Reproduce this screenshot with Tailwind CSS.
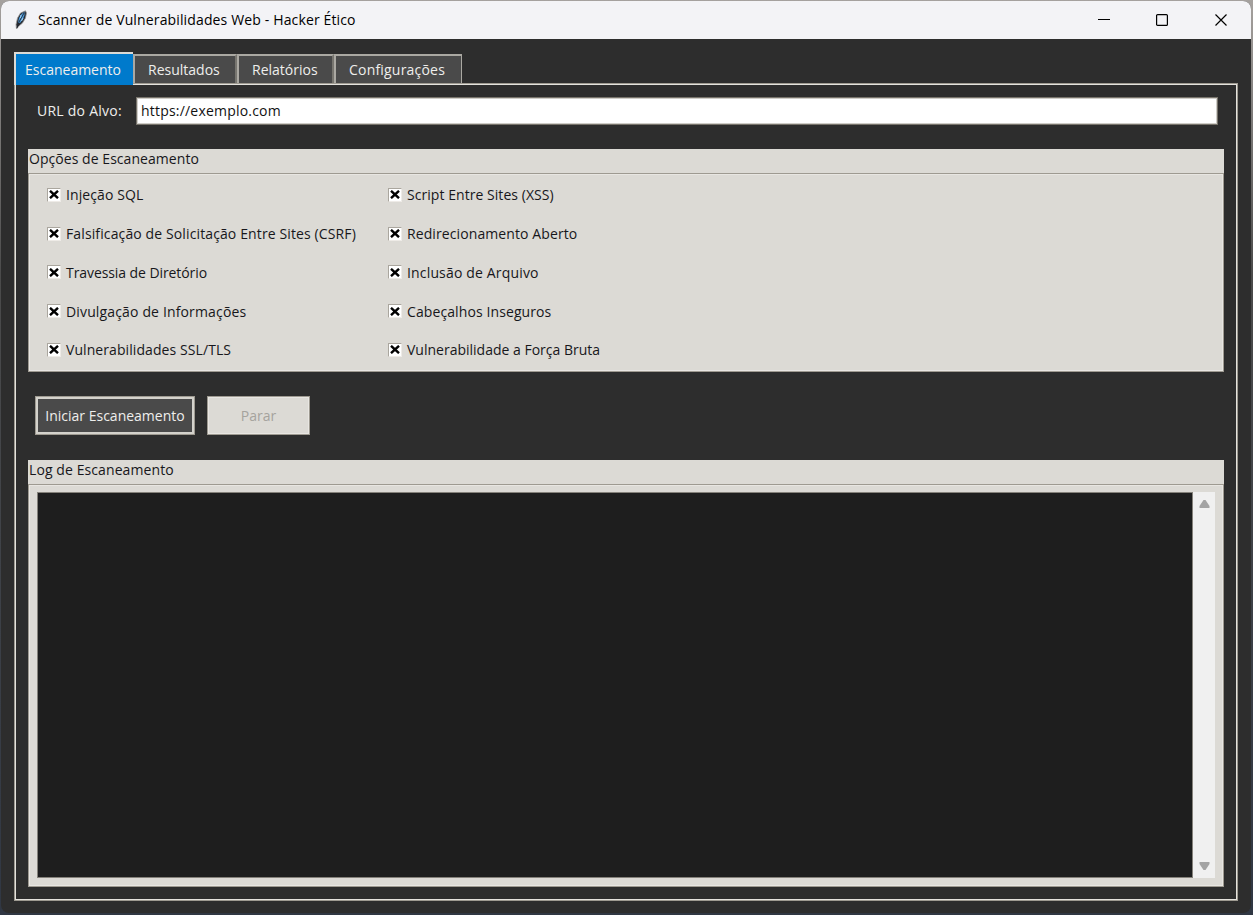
<!DOCTYPE html>
<html lang="pt-BR">
  <head>
    <meta charset="utf-8">
    <title>Scanner de Vulnerabilidades Web - Hacker Ético</title>
    <script src="https://cdn.jsdelivr.net/npm/@tailwindcss/browser@4"></script>
  </head>

  <body class="h-[915px] w-[1253px] overflow-hidden bg-gradient-to-b from-[#a5a19e] via-[#4b4b4b] via-30% to-[#303743] p-px pr-0.5 pb-0.5 font-['Open_Sans',sans-serif] text-[14px] leading-5 whitespace-nowrap">
    <div class="flex h-[912px] w-[1250px] flex-col overflow-hidden rounded-lg bg-[#2d2d2d]">
      <!-- Title bar -->
      <header class="flex h-[38px] shrink-0 items-center bg-[#f3f3f6] pl-3 text-black">
        <svg class="h-5 w-4" viewBox="0 0 16 20">
          <path d="M3.5 19 3 14.500 4.500 8 7.500 3 12.500 .8 13.500 3 12.500 8 9.500 13 6 16Z" fill="#292d35" stroke="#999" stroke-width=".8" />
          <path d="M5 13 6 8 8.500 4 11.500 2 11.500 5 10 9 7 13Z" fill="#4b9cdd" />
          <path d="M4 18 6 12 11 3" fill="none" stroke="#20242c" stroke-width=".9" />
          <path d="M8 5 7.500 8M10 8 8.500 11" stroke="#a7d4f4" />
        </svg>
        <h1 class="ml-[9px] w-[318px] text-[14px] tracking-[0.14px]"><span>Scanner de Vulnerabilidades Web - Hacker Ético</span></h1>
        <div class="ml-auto flex items-center pr-[24px]">
          <svg class="mr-[46px] size-3" viewBox="0 0 12 12"><path d="M0 5.500h12" stroke="#000" /></svg>
          <svg class="mr-[47px] size-3" viewBox="0 0 12 12" fill="none"><rect x=".6" y=".6" width="10.800" height="10.800" rx="1" stroke="#000" stroke-width="1.200" /></svg>
          <svg class="size-3" viewBox="0 0 12 12"><path d="m.5.5 11 11M11.500.5l-11 11" stroke="#000" stroke-width="1.200" /></svg>
        </div>
      </header>

      <main class="flex flex-1 flex-col px-[13px] pt-[13px] pb-3">
        <!-- Tabs -->
        <nav class="flex h-[31px] shrink-0 items-end text-[#eeeeec]">
          <div class="z-10 -mb-[2px] flex h-[33px] w-[119px] items-center border-t-2 border-l-2 border-[#dcdad5] bg-[#007acc] pt-px pl-[9px]"><span>Escaneamento</span></div>
          <div class="flex h-[29px] w-[104px] items-center border-2 border-b-0 border-[#aaa8a2] border-r-[#77756f] bg-[#4a4a4a] pt-px pl-[13px]"><span>Resultados</span></div>
          <div class="flex h-[29px] w-[97px] items-center border-2 border-b-0 border-[#aaa8a2] border-r-[#77756f] bg-[#4a4a4a] pt-px pl-[13px]"><span>Relatórios</span></div>
          <div class="flex h-[29px] w-[128px] items-center border-t-2 border-r border-l-2 border-[#aaa8a2] bg-[#4a4a4a] pt-px pl-[13px]"><span class="tracking-[0.2px]">Configurações</span></div>
        </nav>

        <section class="flex h-[818px] flex-col border border-[#9e9a91] px-[13px] pt-[13px] pb-[14px] text-[#17171b] inset-shadow-[0_0_0_1px_#e4e2dd]">
          <div class="flex h-7 shrink-0 items-center pr-1.5 text-[#eeeeec]">
            <label class="ml-[9px] w-[99px] tracking-[0.25px]"><span>URL do Alvo:</span></label>
            <div class="flex h-7 flex-1 items-center border border-[#77736b] bg-white pl-1 text-[#111] inset-shadow-[0_0_0_1px_#cfcdc8]"><span class="tracking-[0.2px]">https://exemplo.com</span></div>
          </div>

          <!-- Scan options -->
          <div class="mt-6 h-[223px] shrink-0 bg-[#dcdad5]">
            <h2 class="h-6 pl-px tracking-[0.05px]"><span>Opções de Escaneamento</span></h2>
            <div class="h-[199px] border border-[#9e9a91] pt-[1.5px] pl-[18px] inset-shadow-[0_0_0_1px_#e8e6e2]">
              <div id="options" class="grid grid-cols-[341px_341px] auto-rows-[38.75px]"></div>
            </div>
          </div>

          <div class="mt-6 ml-[7px] flex h-[39px] shrink-0 gap-3">
            <button class="w-40 border border-[#9e9a91] bg-[#4a4a4a] text-[#eeeeec] inset-shadow-[0_0_0_2px_#d4d2cc]"><span>Iniciar Escaneamento</span></button>
            <button class="w-[103px] border border-[#9e9a91] bg-[#dcdad5] text-[#a5a39d] inset-shadow-[0_0_0_1px_#e8e6e2]" disabled><span>Parar</span></button>
          </div>

          <!-- Scan log -->
          <div class="mt-[25px] h-[427px] shrink-0 bg-[#dcdad5]">
            <h2 class="h-6 pl-px tracking-[0.09px]"><span>Log de Escaneamento</span></h2>
            <div class="flex h-[403px] border border-[#9e9a91] pt-[7px] pr-2 pb-2 pl-2 inset-shadow-[0_0_0_1px_#e8e6e2]">
              <div class="flex-1 border border-[#85827b] bg-[#1e1e1e]"></div>
              <div class="flex w-[22px] flex-col items-center justify-between bg-[#f0f0f0] py-[7px] pl-px">
                <svg class="h-2.5 w-[11px]" viewBox="0 0 11 10"><path d="M4.500 1h2L10.500 7v2H.5V7Z" fill="#a3a3a3" /></svg>
                <svg class="h-2.5 w-[11px]" viewBox="0 0 11 10"><path d="M4.500 9h2L10.500 3V1H.5v2Z" fill="#a3a3a3" /></svg>
              </div>
            </div>
          </div>
        </section>
      </main>
    </div>

    <script>
      const options = [
        { name: 'Injeção SQL', tracking: 'tracking-[0.1px]' },
        { name: 'Script Entre Sites (XSS)', tracking: 'tracking-[0.05px]' },
        { name: 'Falsificação de Solicitação Entre Sites (CSRF)', tracking: 'tracking-[0.12px]' },
        { name: 'Redirecionamento Aberto', tracking: 'tracking-[0.1px]' },
        { name: 'Travessia de Diretório', tracking: 'tracking-[-0.08px]' },
        { name: 'Inclusão de Arquivo', tracking: 'tracking-[0.16px]' },
        { name: 'Divulgação de Informações', tracking: 'tracking-[0.15px]' },
        { name: 'Cabeçalhos Inseguros', tracking: 'tracking-[0.1px]' },
        { name: 'Vulnerabilidades SSL/TLS', tracking: 'tracking-[0.08px]' },
        { name: 'Vulnerabilidade a Força Bruta', tracking: 'tracking-normal' },
      ]

      document.getElementById('options').innerHTML = options.map((option) => `
        <label class="flex items-center">
          <span class="flex size-[14px] items-center justify-center border border-[#aaa69e] border-r-[#eeebe7] border-b-[#eeebe7] bg-white">
            <svg class="h-[9px] w-[10px]" viewBox="0 0 10 9"><path d="m1 .8 8 7.400M9 .8 1 8.200" stroke="#000" stroke-width="2.400" /></svg>
          </span>
          <span class="ml-[5px] pt-px ${option.tracking}">${option.name}</span>
        </label>
      `).join('')
    </script>
  </body>
</html>
